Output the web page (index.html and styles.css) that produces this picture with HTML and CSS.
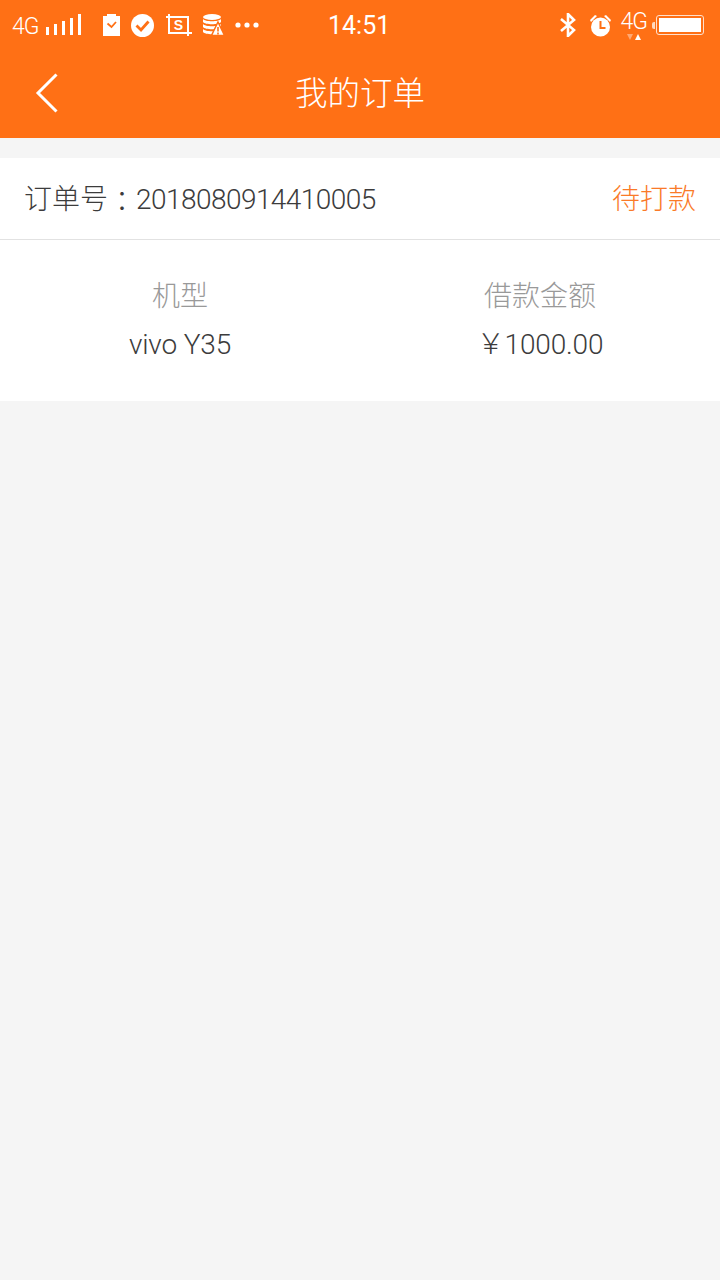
FILE: index.html
```html
<!DOCTYPE html>
<html lang="zh-CN">
<head>
  <meta charset="UTF-8" />
  <meta name="viewport" content="width=device-width, initial-scale=1" />
  <title>我的订单</title>
  <link rel="stylesheet" href="styles.css">
</head>
<body>
  <div class="top">
    <div class="status-bar">
      <div class="status-left">
        <span class="net net-left">4G</span>
        <svg class="signal" width="36" height="22" viewBox="0 0 36 22" fill="#fff">
          <rect x="0" y="13" width="3" height="8"/>
          <rect x="8" y="10" width="3" height="11"/>
          <rect x="16" y="7" width="3" height="14"/>
          <rect x="24" y="4" width="3" height="17"/>
          <rect x="32" y="0" width="3" height="21"/>
        </svg>
        <svg class="ico-clip" width="17" height="22" viewBox="0 0 17 22">
          <path d="M0 2h4V0h9v2h4v20H0z" fill="#fff"/>
          <path d="M4.5 9.5l4 3.5 4.5-5" fill="none" stroke="#ff7015" stroke-width="1.8"/>
        </svg>
        <svg class="ico-check" width="23" height="23" viewBox="0 0 23 23">
          <circle cx="11.5" cy="11.5" r="11.5" fill="#fff"/>
          <path d="M5.5 11.5l4.5 4.5 7.5-8.5" fill="none" stroke="#ff7015" stroke-width="2.8"/>
        </svg>
        <svg class="ico-shot" width="26" height="22" viewBox="0 0 26 22" fill="none" stroke="#fff" stroke-width="2">
          <path d="M3 0v19h23M0 3h22v19"/>
          <text x="12.5" y="16" font-size="14" font-family="Liberation Sans" font-weight="700" text-anchor="middle" fill="#fff" stroke="none">S</text>
        </svg>
        <svg class="ico-db" width="21" height="22" viewBox="0 0 21 22" fill="#fff">
          <ellipse cx="9" cy="3" rx="9" ry="3"/>
          <path d="M0 5c2 3 16 3 18 0v3c-2 3-16 3-18 0zM0 10c2 3 16 3 18 0v3c-2 3-16 3-18 0zM0 15c2 3 16 3 18 0v3c-2 3-16 3-18 0z"/>
          <path d="M15 8l6.5 13.5h-13z" stroke="#ff7015" stroke-width="1.5"/>
          <path d="M15 13v4.5M15 18.500v2" stroke="#ff7015" stroke-width="1.6"/>
        </svg>
        <svg class="ico-more" width="24" height="6" viewBox="0 0 24 6" fill="#fff">
          <circle cx="3" cy="3" r="2.6"/>
          <circle cx="12" cy="3" r="2.6"/>
          <circle cx="21" cy="3" r="2.6"/>
        </svg>
      </div>
      <span class="time">14:51</span>
      <div class="status-right">
        <svg class="ico-bt" width="18" height="24" viewBox="0 0 18 24" fill="none" stroke="#fff" stroke-width="2.6">
          <path d="M2 6l13 11-6 6V1l6 6L2 18"/>
        </svg>
        <svg class="ico-alarm" width="23" height="23" viewBox="0 0 23 23">
          <path d="M1 6l5-5 2 1-6 6zM22 6l-5-5-2 1 6 6z" fill="#fff"/>
          <circle cx="11.500" cy="13" r="9.500" fill="#fff"/>
          <path d="M11.500 7v7h5" fill="none" stroke="#ff7015" stroke-width="2"/>
        </svg>
        <div class="data-net">
          <span class="net net-small">4G</span>
          <svg width="20" height="8" viewBox="0 0 20 8">
            <path d="M3 1h6L6 7z" fill="#ffa873"/>
            <path d="M11 7h6l-3-6z" fill="#fff"/>
          </svg>
        </div>
        <div class="battery">
          <span class="battery-cap"></span>
          <span class="battery-body"><span class="battery-fill"></span></span>
        </div>
      </div>
    </div>
    <div class="nav">
      <svg class="back" width="24" height="40" viewBox="0 0 24 40" fill="none" stroke="#fff" stroke-width="3">
        <path d="M21.500 1.500L3 20l18.500 18.500"/>
      </svg>
      <h1>我的订单</h1>
    </div>
  </div>

  <div class="order">
    <div class="order-head">
      <span class="order-no">订单号<span class="colon" lang="zh-TW">：</span><span class="digits">2018080914410005</span></span>
      <span class="order-status">待打款</span>
    </div>
    <div class="order-info">
      <div class="info-col">
        <div class="info-label">机型</div>
        <div class="info-value">vivo Y35</div>
      </div>
      <div class="info-col">
        <div class="info-label">借款金额</div>
        <div class="info-value">￥1000.00</div>
      </div>
    </div>
  </div>
</body>
</html>
```

FILE: styles.css
```css
:root {
  --orange: #ff7015;
  --grey-bg: #f5f5f5;
  --text: #3c3c3c;
}

body {
  margin: 0;
  min-height: 1280px;
  background: var(--grey-bg);
  font-family: Roboto, "Noto Sans CJK SC", sans-serif;
  font-weight: 300;
  color: var(--text);
}

.top {
  background: var(--orange);
  color: #fff;
}

.status-bar {
  height: 46px;
  display: flex;
  align-items: center;
  justify-content: space-between;
  position: relative;
  padding: 4px 16px 0 12px;
  box-sizing: border-box;
}

.status-left,
.status-right {
  display: flex;
  align-items: center;
}

.net {
  font-size: 23px;
  letter-spacing: -1px;
}

.net-left {
  margin-top: 3px;
}

.signal { margin-left: 7px; }
.ico-clip { margin-left: 21px; }
.ico-check { margin-left: 11px; }
.ico-shot { margin-left: 12px; }
.ico-db { margin-left: 11px; }
.ico-more { margin-left: 11px; }

.time {
  position: absolute;
  left: 328px;
  font-size: 25px;
  font-weight: 400;
}

.ico-bt { margin-right: 12px; }
.ico-alarm { margin-right: 9px; }

.data-net {
  display: flex;
  flex-direction: column;
  align-items: center;
  height: 30px;
  margin-top: 2px;
}

.net-small {
  line-height: 22px;
}

.battery {
  display: flex;
  align-items: center;
  margin-left: 5px;
}

.battery-cap {
  width: 3px;
  height: 7px;
  background: #ffd9bf;
  border-radius: 2px 0 0 2px;
  margin-right: 1px;
}

.battery-body {
  display: block;
  width: 48px;
  height: 20px;
  padding: 2px;
  box-sizing: border-box;
  border: 1px solid #ffe0cc;
  border-radius: 3px;
}

.battery-fill {
  display: block;
  height: 100%;
  background: #fff;
}

.nav {
  height: 92px;
  display: flex;
  align-items: center;
  justify-content: center;
  position: relative;
  padding-bottom: 4px;
  box-sizing: border-box;
}

.nav h1 {
  margin: 0;
  font-size: 32.5px;
  font-weight: 300;
}

.back {
  position: absolute;
  left: 35px;
  top: 27px;
}

.order {
  margin-top: 20px;
  background: #fff;
}

.order-head {
  height: 82px;
  display: flex;
  align-items: center;
  justify-content: space-between;
  padding: 0 24px 4px;
  border-bottom: 1px solid #e2e2e2;
  box-sizing: border-box;
  font-size: 28px;
}

/* colon sits centred in its box in the TC font */
.colon {
  font-family: "Noto Sans CJK TC", sans-serif;
  line-height: 1;
  vertical-align: -3px;
}

.digits {
  letter-spacing: -0.55px;
}

.order-status {
  color: #fa7a28;
}

.order-info {
  height: 161px;
  display: grid;
  grid-template-columns: 1fr 1fr;
  padding-top: 34px;
  box-sizing: border-box;
  text-align: center;
}

.info-label {
  font-size: 28px;
  line-height: 46px;
  color: #999;
}

.info-value {
  font-size: 28px;
  line-height: 50px;
  letter-spacing: -0.15px;
}
```
